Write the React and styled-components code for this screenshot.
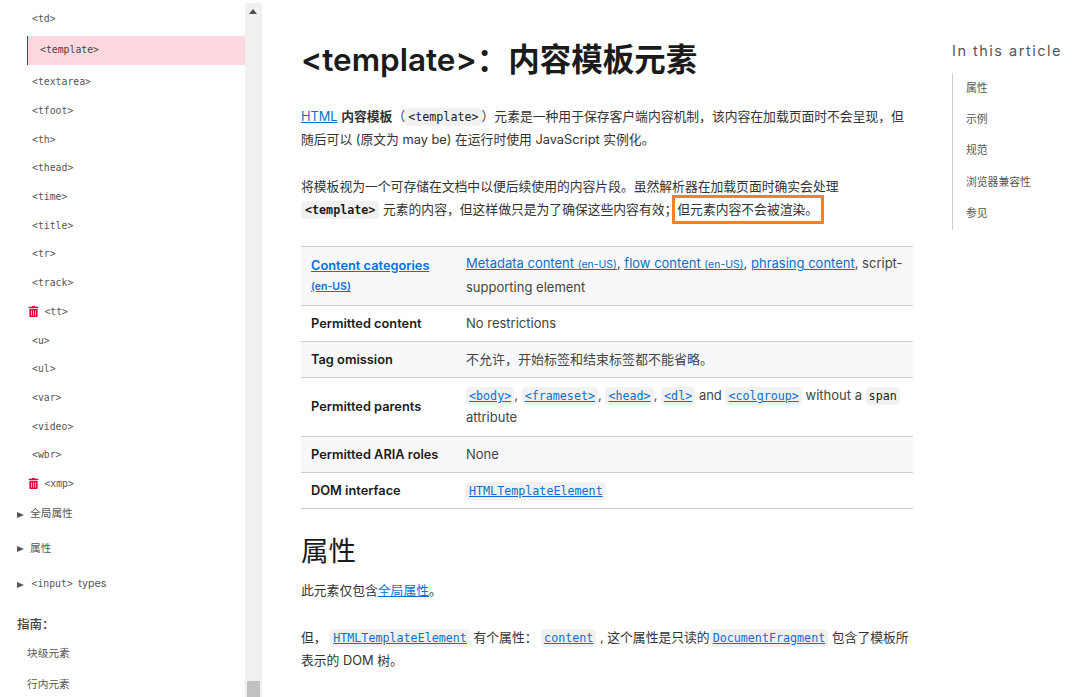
import React from 'react';
import styled, { createGlobalStyle } from 'styled-components';
import { FaTrashAlt } from 'react-icons/fa';

const sans = `Inter, "Noto Sans CJK SC", sans-serif`;
const mono = `"DejaVu Sans Mono", "Noto Sans CJK SC", monospace`;

const GlobalStyle = createGlobalStyle`
  html, body {
    margin: 0;
    padding: 0;
    height: 697px;
    overflow: hidden;
    background: #fff;
    font-family: ${sans};
  }
`;

const Page = styled.div`
  display: flex;
  width: 1081px;
  height: 697px;
  overflow: hidden;
`;

const SideBar = styled.nav`
  width: 245px;
  flex: none;
  padding-top: 4.8px;
  box-sizing: border-box;
  overflow: hidden;
`;

const SideItem = styled.div`
  display: flex;
  align-items: center;
  height: 28.7px;
  padding-left: 32px;
  font: 9.8px/1 ${mono};
  color: #555;
  white-space: nowrap;
`;

const ActiveItem = styled(SideItem)`
  height: 29px;
  margin: 2.4px 0 3px 27px;
  padding-left: 12px;
  padding-bottom: 1px;
  box-sizing: border-box;
  background: #ffd7de;
  border-left: 1px solid #c4003a;
  color: #444;
`;

const DeprecatedItem = styled(SideItem)`
  padding-left: 28px;
  gap: 5.4px;
  svg {
    color: #e0003c;
    font-size: 11px;
  }
`;

const Group = styled.div`
  display: flex;
  align-items: center;
  gap: 6px;
  height: ${p => p.$height}px;
  padding-left: 17px;
  font: 10.7px/1 ${sans};
  color: #555;
  code {
    margin: 0 2.5px 0 1.5px;
    font: 9.8px/1 ${mono};
  }
`;

const Arrow = styled.span`
  width: 0;
  height: 0;
  border-left: 7px solid #555;
  border-top: 3.5px solid transparent;
  border-bottom: 3.5px solid transparent;
`;

const GuideTitle = styled.div`
  padding: 12.5px 0 4.5px 17px;
  font: 500 12.5px/20px ${sans};
  color: #444;
`;

const GuideItem = styled.div`
  display: flex;
  align-items: center;
  height: 31px;
  padding-left: 27px;
  font: 10.7px/1 ${sans};
  color: #555;
`;

const Track = styled.div`
  position: relative;
  width: 17px;
  flex: none;
  margin-top: 3px;
  background: #f0f0f0;
`;

const TrackArrow = styled.span`
  position: absolute;
  top: 6px;
  left: 4px;
  width: 0;
  height: 0;
  border-bottom: 5px solid #505050;
  border-left: 4px solid transparent;
  border-right: 4px solid transparent;
`;

const TrackThumb = styled.span`
  position: absolute;
  bottom: 0;
  left: 2px;
  width: 13px;
  height: 16px;
  background: #c1c1c1;
`;

const Main = styled.main`
  width: 612px;
  flex: none;
  margin-left: 39px;
  color: #333;
  font: 12.8px/23px ${sans};
`;

const Title = styled.h1`
  margin: 37px 0 21.5px;
  font: 600 31.5px/46px ${sans};
  color: #1b1b1b;
  white-space: nowrap;
`;

const Para = styled.p`
  margin: 0 0 ${p => p.$gap ?? 24}px;
  white-space: nowrap;
`;

const Link = styled.a`
  color: #0c6fcf;
  text-decoration: underline;
`;

const SmallTag = styled.span`
  font-size: 10.5px;
`;

const Code = styled.code`
  padding: 2px ${p => (p.$bold ? 4 : 3)}px;
  border-radius: 4px;
  background: #f1f1f1;
  color: ${p => (p.$link ? '#0c6fcf' : '#1b1b1b')};
  text-decoration: ${p => (p.$link ? 'underline' : 'none')};
  font: ${p => (p.$bold ? 700 : 400)} 11.7px/1 ${mono};
`;

const Marked = styled.span`
  position: relative;
  &::after {
    content: '';
    position: absolute;
    left: -5px;
    right: -5.5px;
    top: -6.5px;
    bottom: -7px;
    border: 3px solid #f58025;
  }
`;

const Table = styled.table`
  width: 612px;
  margin: 25.5px 0 0;
  border-collapse: collapse;
  table-layout: fixed;
  border-top: 1px solid #cdcdcd;
`;

const Row = styled.tr`
  height: ${p => p.$height}px;
  border-bottom: 1px solid #cdcdcd;
  &:nth-child(odd) {
    background: #f8f8fa;
  }
`;

const HeadCell = styled.th`
  width: 155px;
  padding: 0 0 0 10px;
  box-sizing: content-box;
  text-align: left;
  font: 600 12.8px/19.5px ${sans};
  color: #1b1b1b;
`;

const Cell = styled.td`
  padding: 0 0 2px 0;
  font: 13px/22px ${sans};
  color: #444;
`;

const SectionTitle = styled.h2`
  margin: 23px 0 8.5px;
  font: 400 27.5px/38px ${sans};
  color: #1b1b1b;
`;

const Toc = styled.aside`
  margin-left: 39px;
  flex: 1;
  padding-top: 41px;
  white-space: nowrap;
`;

const TocTitle = styled.div`
  font: 400 14.5px/20px ${sans};
  letter-spacing: 1.5px;
  color: #555;
`;

const TocList = styled.div`
  display: flex;
  flex-direction: column;
  margin-top: 11.5px;
  padding-left: 13px;
  border-left: 1px solid #cdcdcd;
  font: 10.8px/31.4px ${sans};
  color: #555;
`;

const names1 = ['<textarea>', '<tfoot>', '<th>', '<thead>', '<time>', '<title>', '<tr>', '<track>'];
const names2 = ['<u>', '<ul>', '<var>', '<video>', '<wbr>'];

export default function App() {
  return (
    <Page>
      <GlobalStyle />
      <SideBar>
        <SideItem>{'<td>'}</SideItem>
        <ActiveItem>{'<template>'}</ActiveItem>
        {names1.map(n => <SideItem key={n}>{n}</SideItem>)}
        <DeprecatedItem><FaTrashAlt />{'<tt>'}</DeprecatedItem>
        {names2.map(n => <SideItem key={n}>{n}</SideItem>)}
        <DeprecatedItem><FaTrashAlt />{'<xmp>'}</DeprecatedItem>
        <Group $height={33}><Arrow />全局属性</Group>
        <Group $height={36}><Arrow />属性</Group>
        <Group $height={35}><Arrow /><span><code>{'<input>'}</code> types</span></Group>
        <GuideTitle>指南&#xFF1A;</GuideTitle>
        <GuideItem>块级元素</GuideItem>
        <GuideItem>行内元素</GuideItem>
      </SideBar>
      <Track>
        <TrackArrow />
        <TrackThumb />
      </Track>
      <Main>
        <Title>{'<template>'}&#xFF1A;内容模板元素</Title>
        <Para>
          <Link>HTML</Link> <strong>内容模板</strong>&#xFF08;<Code>{'<template>'}</Code>&#xFF09;元素是一种用于保存客户端内容机制&#xFF0C;该内容在加载页面时不会呈现&#xFF0C;但
          <br />
          随后可以 (原文为 may be) 在运行时使用 JavaScript 实例化。
        </Para>
        <Para $gap={0}>
          将模板视为一个可存储在文档中以便后续使用的内容片段。虽然解析器在加载页面时确实会处理
          <br />
          <Code $bold>{'<template>'}</Code> 元素的内容&#xFF0C;但这样做只是为了确保这些内容有效&#xFF1B;<Marked>但元素内容不会被渲染。</Marked>
        </Para>
        <Table>
          <tbody>
            <Row $height={59}>
              <HeadCell>
                <Link>Content categories</Link>
                <br />
                <Link><SmallTag>(en-US)</SmallTag></Link>
              </HeadCell>
              <Cell>
                <Link>Metadata content <SmallTag>(en-US)</SmallTag></Link>, <Link>flow content <SmallTag>(en-US)</SmallTag></Link>, <Link>phrasing content</Link>, script-supporting element
              </Cell>
            </Row>
            <Row $height={36}>
              <HeadCell>Permitted content</HeadCell>
              <Cell>No restrictions</Cell>
            </Row>
            <Row $height={36}>
              <HeadCell>Tag omission</HeadCell>
              <Cell>不允许&#xFF0C;开始标签和结束标签都不能省略。</Cell>
            </Row>
            <Row $height={59}>
              <HeadCell>Permitted parents</HeadCell>
              <Cell>
                <Code $link>{'<body>'}</Code>, <Code $link>{'<frameset>'}</Code>, <Code $link>{'<head>'}</Code>, <Code $link>{'<dl>'}</Code> and <Code $link>{'<colgroup>'}</Code> without a <Code>span</Code> attribute
              </Cell>
            </Row>
            <Row $height={36}>
              <HeadCell>Permitted ARIA roles</HeadCell>
              <Cell>None</Cell>
            </Row>
            <Row $height={36}>
              <HeadCell>DOM interface</HeadCell>
              <Cell><Code $link>HTMLTemplateElement</Code></Cell>
            </Row>
          </tbody>
        </Table>
        <SectionTitle>属性</SectionTitle>
        <Para $gap={24.5}>此元素仅包含<Link>全局属性</Link>。</Para>
        <Para>
          但&#xFF0C; <Code $link>HTMLTemplateElement</Code> 有个属性&#xFF1A; <Code $link>content</Code> , 这个属性是只读的<Code $link>DocumentFragment</Code> 包含了模板所
          <br />
          表示的 DOM 树。
        </Para>
      </Main>
      <Toc>
        <TocTitle>In this article</TocTitle>
        <TocList>
          <span>属性</span>
          <span>示例</span>
          <span>规范</span>
          <span>浏览器兼容性</span>
          <span>参见</span>
        </TocList>
      </Toc>
    </Page>
  );
}
